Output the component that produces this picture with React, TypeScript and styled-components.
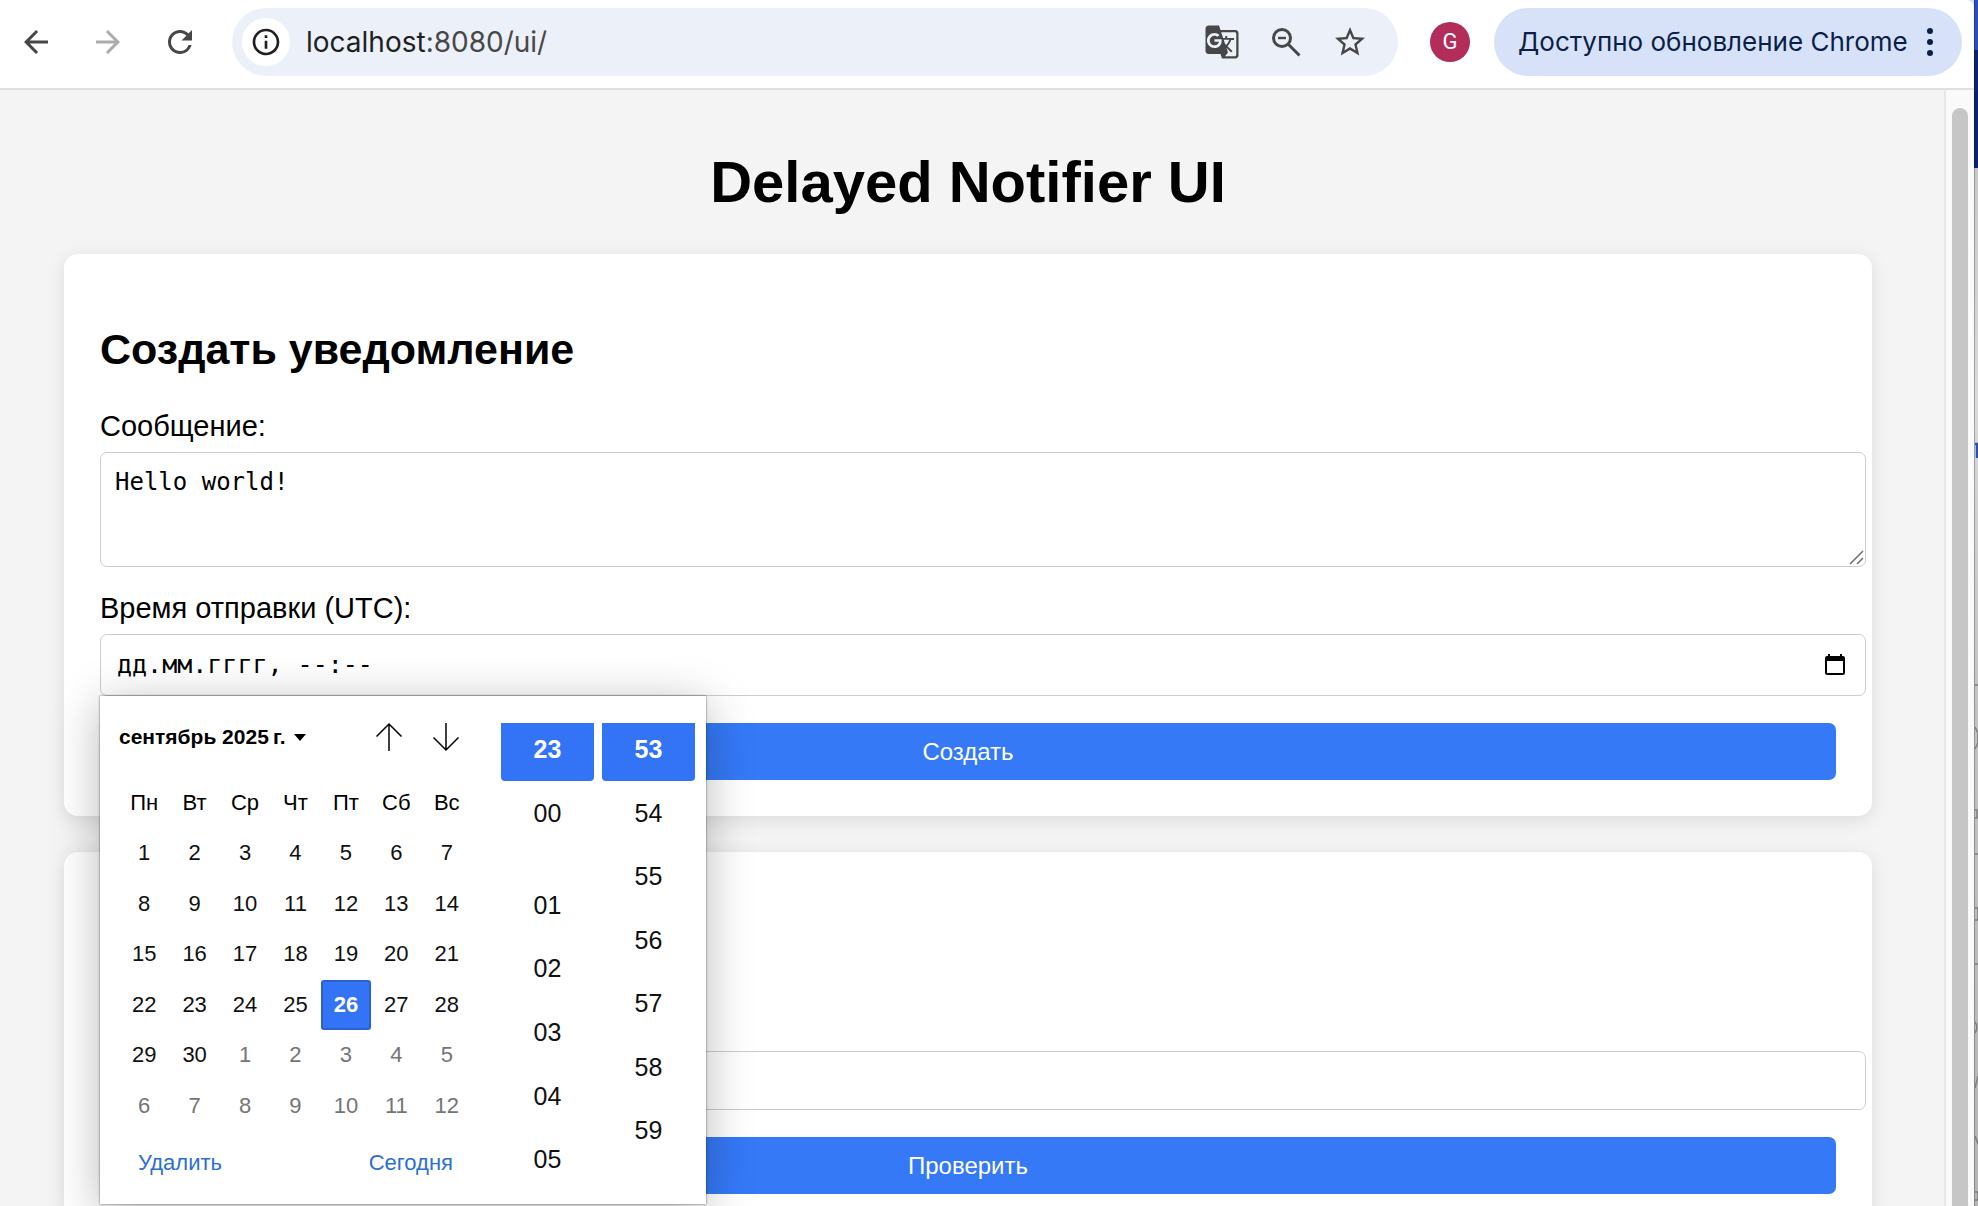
import React from "react";
import styled, { createGlobalStyle, css } from "styled-components";
import {
  MdArrowBack,
  MdArrowForward,
  MdGTranslate,
  MdOutlineInfo,
  MdRefresh,
  MdStarBorder,
} from "react-icons/md";

const sans = `"Liberation Sans", Arial, Helvetica, sans-serif`;
const mono = `"DejaVu Sans Mono", Menlo, monospace`;
const system = `Inter, Roboto, sans-serif`;

const GlobalStyle = createGlobalStyle`
  *, *::before, *::after { box-sizing: border-box; }
  body { margin: 0; overflow: hidden; font-family: ${sans}; color: #000; }
  button { border: 0; padding: 0; background: none; font: inherit; color: inherit; cursor: pointer; }
  svg { display: block; flex: none; }
`;

/* ---------- browser window ---------- */

const Screen = styled.div`
  display: flex;
  height: 100vh;
  overflow: hidden;
  background: #d3e1f9;
`;

const Window = styled.div`
  flex: 1;
  min-width: 0;
  display: flex;
  flex-direction: column;
`;

const Toolbar = styled.header`
  flex: none;
  display: flex;
  align-items: center;
  height: 90px;
  padding: 8px 12px 12px 18px;
  background: #fff;
  border-bottom: 2px solid #e0e0e0;
  border-top-right-radius: 8px;
  font-family: ${system};
`;

const NavGroup = styled.nav`
  display: flex;
  gap: 36px;
  margin-right: 34px;
`;

const IconButton = styled.button<{ $muted?: boolean }>`
  display: grid;
  place-items: center;
  width: 36px;
  height: 36px;
  color: ${(p) => (p.$muted ? "#ababab" : "#474747")};
`;

const Omnibox = styled.div`
  flex: 1;
  min-width: 0;
  display: flex;
  align-items: center;
  height: 68px;
  padding: 0 30px 0 10px;
  border-radius: 34px;
  background: #ecf1f9;
`;

const SiteInfo = styled.button`
  display: grid;
  place-items: center;
  width: 48px;
  height: 48px;
  border-radius: 50%;
  background: #fff;
  color: #1f1f1f;
`;

const Address = styled.div`
  flex: 1;
  margin-left: 16px;
  font-size: 28px;
  line-height: 36px;
  color: #474747;
`;

const Host = styled.span`
  color: #1f1f1f;
`;

const OmniActions = styled.div`
  display: flex;
  gap: 28px;
`;

const Avatar = styled.button`
  width: 40px;
  height: 40px;
  margin: 0 24px 0 32px;
  border-radius: 50%;
  background: #b32d5b;
  color: #fff;
  font-family: Roboto, sans-serif;
  font-size: 22px;
  line-height: 40px;
`;

const UpdateButton = styled.button`
  display: flex;
  align-items: center;
  justify-content: space-between;
  width: 468px;
  height: 68px;
  padding: 0 28px 0 24px;
  border-radius: 34px;
  background: #d7e2f9;
  color: #0a1f48;
  font-size: 26px;
  line-height: 36px;
  white-space: nowrap;
`;

const Viewport = styled.div`
  flex: 1;
  min-height: 0;
  display: flex;
`;

const ScrollTrack = styled.div`
  flex: none;
  width: 30px;
  padding: 18px 6px 0;
  border-left: 2px solid #e7e7e7;
  background: #fafafa;
`;

const ScrollThumb = styled.div`
  width: 16px;
  height: 100%;
  border-radius: 8px 8px 0 0;
  background: #c6c6c6;
`;

const Backdrop = styled.aside`
  flex: none;
  width: 4px;
  overflow: hidden;
  border-left: 1px solid rgba(0, 0, 0, 0.25);
  background: linear-gradient(#2a50b8 50px, #0b226f 50px 168px, #c9c9c9 168px, #dadada 400px, #c4c4c4 685px, #b5b5b5);
`;

/* ---------- page ---------- */

const Page = styled.main`
  flex: 1;
  min-width: 0;
  overflow: hidden;
  padding: 20px 72px 0 64px;
  background: #f4f4f4;
`;

const Title = styled.h1`
  margin: 38px 0 39px;
  font-size: 58px;
  line-height: 67px;
  text-align: center;
`;

const Card = styled.section<{ $top?: number }>`
  margin-bottom: 36px;
  padding: ${(p) => p.$top ?? 36}px 36px 36px;
  border-radius: 14px;
  background: #fff;
  box-shadow: 0 4px 18px rgba(0, 0, 0, 0.1);
`;

const Heading = styled.h2`
  margin: 34px 0 35px;
  font-size: 43px;
  line-height: 50px;
`;

const Label = styled.label`
  display: block;
  margin-bottom: 9px;
  font-size: 29px;
  line-height: 34px;
`;

const Field = styled.div`
  position: relative;
  width: calc(100% + 30px);
  margin-bottom: 27px;
`;

const AreaField = styled(Field)`
  margin-bottom: 24px;
`;

const box = css`
  display: block;
  width: 100%;
  padding: 14px;
  border: 1px solid #ccc;
  border-radius: 7px;
  background: #fff;
  color: #000;
  outline: none;
`;

const TextArea = styled.textarea`
  ${box}
  height: 115px;
  font-family: ${mono};
  font-size: 24px;
  line-height: 30px;
  resize: none;
`;

const Grip = styled.svg`
  position: absolute;
  right: 2px;
  bottom: 2px;
  pointer-events: none;
`;

const TextInput = styled.input`
  ${box}
  font-family: ${sans};
  font-size: 24px;
  line-height: 29px;
  height: 59px;
`;

const DateBox = styled.div`
  ${box}
  display: flex;
  align-items: center;
  height: 62px;
  padding-right: 20px;
`;

const DateInput = styled.input`
  flex: 1;
  min-width: 0;
  padding: 0 2px;
  border: 0;
  outline: none;
  background: transparent;
  color: #000;
  font-family: ${mono};
  font-size: 25px;
  line-height: 32px;
`;

const Submit = styled.button`
  display: block;
  width: 100%;
  padding: 14px;
  border-radius: 7px;
  background: #3579f7;
  color: #fff;
  font-size: 24px;
  line-height: 29px;
  text-align: center;
`;

/* ---------- date and time picker ---------- */

const Picker = styled.div`
  position: absolute;
  z-index: 2;
  top: 100%;
  left: 0;
  display: flex;
  justify-content: space-between;
  width: 606px;
  height: 508px;
  padding: 0 11px 0 19px;
  background: #fff;
  box-shadow: 0 0 2px rgba(0, 0, 0, 0.6), 0 8px 44px rgba(0, 0, 0, 0.28);
  font-size: 22px;
  line-height: 24px;
`;

const Calendar = styled.div`
  width: 353px;
`;

const MonthBar = styled.div`
  display: flex;
  align-items: center;
  height: 82px;
  padding-right: 8px;
`;

const MonthButton = styled.button`
  display: flex;
  align-items: center;
  gap: 8px;
  margin-right: auto;
  font-size: 21px;
  font-weight: 700;
`;

const StepButton = styled.button`
  display: grid;
  place-items: center;
  width: 36px;
  height: 36px;
  margin-left: 21px;
`;

const Days = styled.table`
  width: 353px;
  height: 353px;
  table-layout: fixed;
  border-collapse: collapse;
  text-align: center;

  th,
  td {
    height: 50px;
    padding: 0;
    font-weight: 400;
  }
`;

const Day = styled.button<{ $other?: boolean; $selected?: boolean }>`
  display: block;
  width: 50px;
  height: 50px;
  margin: 0 auto;
  color: ${(p) => (p.$other ? "#757575" : "#101010")};
  ${(p) =>
    p.$selected &&
    css`
      border: 2px solid #2a62cd;
      border-radius: 3px;
      background: #3374f6;
      color: #fff;
      font-weight: 700;
    `}
`;

const PickerActions = styled.div`
  display: flex;
  justify-content: space-between;
  padding: 20px 19px 0;
  color: #2c6fd1;
`;

const Times = styled.div`
  display: flex;
  align-items: flex-start;
  gap: 8px;
  padding-top: 27px;
`;

const TimeColumn = styled.div<{ $height: number }>`
  display: flex;
  flex-direction: column;
  width: 93px;
  height: ${(p) => p.$height}px;
  font-size: 25px;
  line-height: 28px;
`;

const TimeOption = styled.button<{ $selected?: boolean; $gap?: boolean }>`
  flex: 1 0 0;
  margin-bottom: ${(p) => (p.$gap ? 28 : 0)}px;
  text-align: center;
  color: #101010;
  ${(p) =>
    p.$selected &&
    css`
      flex: none;
      height: 58px;
      padding-bottom: 6px;
      border-radius: 0 0 4px 4px;
      background: #3374f6;
      color: #fff;
      font-weight: 700;
    `}
`;

const weekdays = ["Пн", "Вт", "Ср", "Чт", "Пт", "Сб", "Вс"];
const weeks = Array.from({ length: 6 }, (_, w) =>
  Array.from({ length: 7 }, (_, d) => {
    const n = w * 7 + d + 1;
    return { day: n > 30 ? n - 30 : n, other: n > 30 };
  })
);
const hours = ["23", "00", "01", "02", "03", "04", "05"];
const minutes = ["53", "54", "55", "56", "57", "58", "59"];

function ZoomOutIcon() {
  return (
    <svg width="36" height="36" viewBox="0 0 36 36" fill="none" stroke="currentColor" strokeWidth="3">
      <circle cx="14" cy="14" r="8.5" />
      <path d="M20 20l11.500 11.500" strokeWidth="3" />
      <path d="M10 14h8" strokeWidth="2.4" />
    </svg>
  );
}

function StepIcon({ down }: { down?: boolean }) {
  return (
    <svg width="28" height="30" viewBox="0 0 28 30" fill="none" stroke="#000" strokeWidth="1.5">
      <path d={down ? "M14 1v27M1.5 15.5L14 28l12.500-12.500" : "M14 29V2M1.500 14.500L14 2l12.500 12.500"} />
    </svg>
  );
}

function DateTimePicker() {
  return (
    <Picker role="dialog" aria-label="Выбор даты и времени">
      <Calendar>
        <MonthBar>
          <MonthButton type="button">
            {"сентябрь 2025\u202fг."}
            <svg width="12" height="7" viewBox="0 0 12 7">
              <path d="M0 0h12L6 7z" />
            </svg>
          </MonthButton>
          <StepButton type="button" aria-label="Предыдущий месяц">
            <StepIcon />
          </StepButton>
          <StepButton type="button" aria-label="Следующий месяц">
            <StepIcon down />
          </StepButton>
        </MonthBar>
        <Days>
          <thead>
            <tr>
              {weekdays.map((d) => (
                <th key={d} scope="col">{d}</th>
              ))}
            </tr>
          </thead>
          <tbody>
            {weeks.map((week, i) => (
              <tr key={i}>
                {week.map(({ day, other }) => (
                  <td key={day}>
                    <Day type="button" $other={other} $selected={!other && day === 26}>
                      {day}
                    </Day>
                  </td>
                ))}
              </tr>
            ))}
          </tbody>
        </Days>
        <PickerActions>
          <button type="button">Удалить</button>
          <button type="button">Сегодня</button>
        </PickerActions>
      </Calendar>
      <Times>
        <TimeColumn $height={468}>
          {hours.map((h) => (
            <TimeOption key={h} type="button" $selected={h === "23"} $gap={h === "00"}>
              {h}
            </TimeOption>
          ))}
        </TimeColumn>
        <TimeColumn $height={439}>
          {minutes.map((m) => (
            <TimeOption key={m} type="button" $selected={m === "53"}>
              {m}
            </TimeOption>
          ))}
        </TimeColumn>
      </Times>
    </Picker>
  );
}

export default function App() {
  return (
    <>
      <GlobalStyle />
      <Screen>
        <Window>
          <Toolbar>
            <NavGroup>
              <IconButton type="button" aria-label="Назад">
                <MdArrowBack size={36} />
              </IconButton>
              <IconButton type="button" aria-label="Вперёд" $muted>
                <MdArrowForward size={36} />
              </IconButton>
              <IconButton type="button" aria-label="Обновить">
                <MdRefresh size={36} />
              </IconButton>
            </NavGroup>
            <Omnibox>
              <SiteInfo type="button" aria-label="Сведения о сайте">
                <MdOutlineInfo size={32} />
              </SiteInfo>
              <Address>
                <Host>localhost</Host>:8080/ui/
              </Address>
              <OmniActions>
                <IconButton type="button" aria-label="Перевести">
                  <MdGTranslate size={36} />
                </IconButton>
                <IconButton type="button" aria-label="Масштаб">
                  <ZoomOutIcon />
                </IconButton>
                <IconButton type="button" aria-label="В закладки">
                  <MdStarBorder size={36} />
                </IconButton>
              </OmniActions>
            </Omnibox>
            <Avatar type="button">G</Avatar>
            <UpdateButton type="button">
              Доступно обновление Chrome
              <svg width="8" height="30" viewBox="0 0 8 30" fill="currentColor">
                <circle cx="4" cy="4" r="3" />
                <circle cx="4" cy="15" r="3" />
                <circle cx="4" cy="26" r="3" />
              </svg>
            </UpdateButton>
          </Toolbar>
          <Viewport>
            <Page>
              <Title>Delayed Notifier UI</Title>
              <Card>
                <Heading>Создать уведомление</Heading>
                <Label htmlFor="message">Сообщение:</Label>
                <AreaField>
                  <TextArea id="message" defaultValue="Hello world!" />
                  <Grip width="15" height="15" viewBox="0 0 15 15" fill="none" stroke="#6b6b6b" strokeWidth="1.500">
                    <path d="M1 14L14 1M8 14l6-6" />
                  </Grip>
                </AreaField>
                <Label htmlFor="send-at">Время отправки (UTC):</Label>
                <Field>
                  <DateBox>
                    <DateInput id="send-at" defaultValue="дд.мм.гггг, --:--" />
                    <button type="button" aria-label="Открыть календарь">
                      <svg width="20" height="22" viewBox="0 0 20 22">
                        <path d="M3 0h2v2h10V0h2v2h1a2 2 0 0 1 2 2v15a2 2 0 0 1-2 2H2a2 2 0 0 1-2-2V4a2 2 0 0 1 2-2h1zM2 7v12h16V7z" fillRule="evenodd" />
                      </svg>
                    </button>
                  </DateBox>
                  <DateTimePicker />
                </Field>
                <Submit type="button">Создать</Submit>
              </Card>
              <Card $top={199}>
                <Field>
                  <TextInput aria-label="ID уведомления" />
                </Field>
                <Submit type="button">Проверить</Submit>
              </Card>
            </Page>
            <ScrollTrack>
              <ScrollThumb />
            </ScrollTrack>
          </Viewport>
        </Window>
        <Backdrop>
          <svg width="3" height="1206" viewBox="0 0 3 1206" fill="none" stroke="#7d7d7d" strokeWidth="1.500">
            <path d="M0 444h2v14" stroke="#2a50b8" strokeWidth="2.500" />
            <path d="M0 685h3M0 727l3 6v10l-3 6M0 810h2v8H0M0 854h3M0 908h3v12H0M0 964h3M0 1022q4 5 0 11M0 1088l3-12M0 1136l3 8M0 1192h3v8H0" />
          </svg>
        </Backdrop>
      </Screen>
    </>
  );
}
